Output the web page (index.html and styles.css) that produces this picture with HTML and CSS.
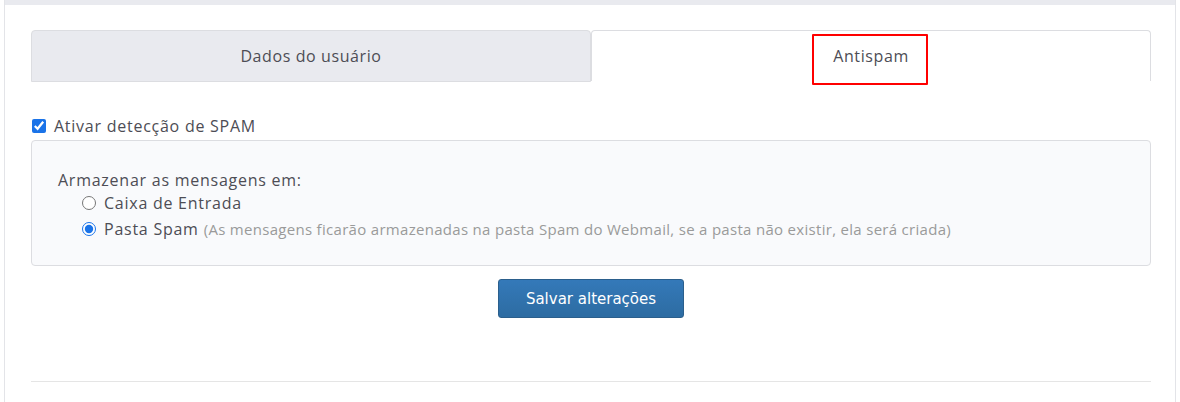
FILE: index.html
```html
<!DOCTYPE html>
<html lang="pt-BR">
<head>
    <meta charset="UTF-8">
    <title>Antispam</title>
    <link rel="stylesheet" href="styles.css">
</head>
<body>
    <div class="panel">
        <div class="panel-top"></div>
        <div class="panel-body">
            <ul class="tabs">
                <li class="tab">Dados do usuário</li>
                <li class="tab active">
                    Antispam
                    <span class="highlight"></span>
                </li>
            </ul>

            <form class="spam-form">
                <label class="check-row">
                    <input type="checkbox" checked>
                    Ativar detecção de SPAM
                </label>

                <div class="options-box">
                    <p class="options-title">Armazenar as mensagens em:</p>
                    <label class="radio-row">
                        <input type="radio" name="destino">
                        Caixa de Entrada
                    </label>
                    <label class="radio-row">
                        <input type="radio" name="destino" checked>
                        Pasta Spam
                        <span class="hint">(As mensagens ficarão armazenadas na pasta Spam do Webmail, se a pasta não existir, ela será criada)</span>
                    </label>
                </div>

                <div class="actions">
                    <button type="submit">Salvar alterações</button>
                </div>
            </form>

            <hr class="divider">
        </div>
    </div>
</body>
</html>
```

FILE: styles.css
```css
body {
    margin: 0;
    padding: 0;
    background-color: #fff;
    font-family: "Open Sans", sans-serif;
    font-size: 16px;
    letter-spacing: 0.75px;
    line-height: 22px;
    color: #4d4d55;
}

.panel {
    margin: 0 4px;
    border-left: 1px solid #e3e4e8;
    border-right: 1px solid #e3e4e8;
    height: 402px;
}

.panel-top {
    height: 5px;
    background-color: #e9eaef;
}

.panel-body {
    padding: 25px 24px 0 26px;
}

.tabs {
    display: flex;
    margin: 0;
    padding: 0;
    list-style: none;
}

.tab {
    position: relative;
    flex: 1;
    height: 50px;
    line-height: 50px;
    text-align: center;
    letter-spacing: 0.6px;
    background-color: #e9eaef;
    border: 1px solid #dcdde1;
    border-radius: 4px 4px 0 0;
}

.tab.active {
    background-color: #fff;
    border-bottom: none;
    height: 50px;
}

.highlight {
    position: absolute;
    left: 220px;
    top: 3px;
    width: 112px;
    height: 47px;
    border: 2px solid #f00;
    border-radius: 1px;
}

.spam-form {
    margin-top: 34px;
}

.check-row {
    display: flex;
    align-items: center;
    height: 20px;
}

.check-row input {
    margin: 0 8px 0 1px;
    width: 14px;
    height: 14px;
    accent-color: #1a73e8;
}

.options-box {
    margin-top: 4px;
    padding: 29px 26px 23px;
    background-color: #f9fafc;
    border: 1px solid #dcdde1;
    border-radius: 4px;
}

.options-title {
    margin: 0;
    line-height: 20px;
}

.radio-row {
    display: flex;
    align-items: center;
    height: 26px;
    padding-left: 24px;
}

.radio-row input {
    margin: 0 8px 0 0;
    width: 14px;
    height: 14px;
    accent-color: #1a73e8;
}

.hint {
    margin-left: 5px;
    font-size: 15px;
    letter-spacing: 0.3px;
    color: #9a9a9a;
}

.actions {
    margin-top: 13px;
    text-align: center;
}

button[type="submit"] {
    padding: 0 27px;
    height: 39px;
    font-family: "DejaVu Sans", Verdana, sans-serif;
    font-size: 15px;
    letter-spacing: 0;
    color: #fff;
    background: linear-gradient(#3479b9, #2d6ca2);
    border: 1px solid #2b5f8c;
    border-radius: 3px;
    cursor: pointer;
}

.divider {
    margin: 63px 0 0;
    border: none;
    border-top: 1px solid #e5e5e5;
}
```
